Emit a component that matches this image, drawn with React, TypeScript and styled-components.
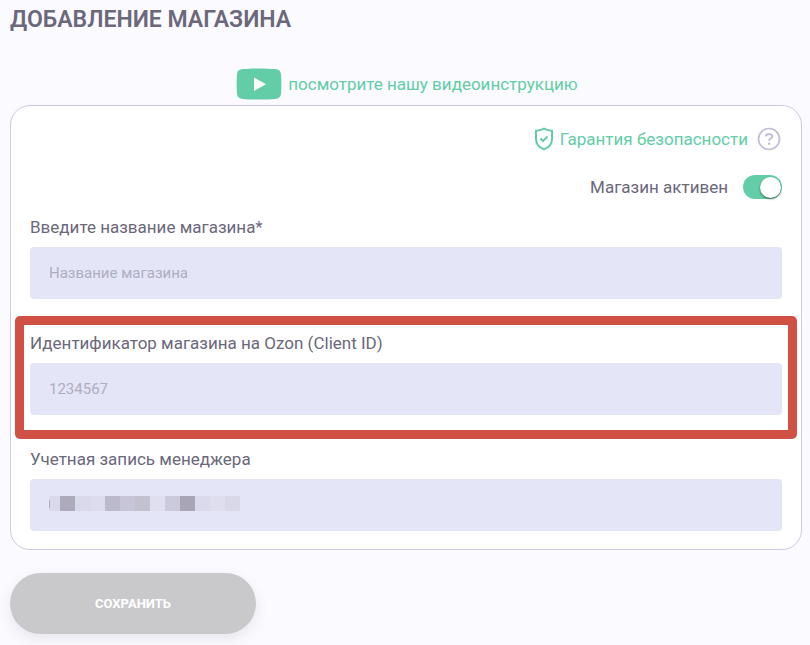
import React from "react";
import styled, { createGlobalStyle } from "styled-components";

const GlobalStyle = createGlobalStyle`
  *, *::before, *::after { box-sizing: border-box; }
  body {
    margin: 0;
    background: #fbfaff;
    color: #6b687b;
    font-family: Roboto, "Noto Sans", sans-serif;
    font-size: 17px;
    line-height: 24px;
  }
`;

const Page = styled.main`
  padding: 8px 8px 11px 10px;
`;

const Title = styled.h1`
  margin: 0 0 36px;
  font-size: 23px;
  line-height: 24px;
  font-weight: 600;
  text-transform: uppercase;
`;

const VideoLink = styled.a`
  display: flex;
  align-items: center;
  justify-content: center;
  gap: 6px;
  margin-bottom: 5px;
  padding-left: 2px;
  color: #62cda6;
  text-decoration: none;
`;

const Form = styled.form`
  margin: 0;
`;

const Card = styled.section`
  display: flex;
  flex-direction: column;
  padding: 21px 19px 18px;
  border: 1px solid #cdc9e2;
  border-radius: 20px;
  background: #fff;
`;

const SecurityRow = styled.div`
  display: flex;
  align-items: center;
  justify-content: flex-end;
  gap: 9px;
  padding-right: 1px;
`;

const SecurityLink = styled.a`
  display: flex;
  align-items: center;
  gap: 6px;
  color: #62cda6;
  text-decoration: none;
`;

const HelpButton = styled.button`
  display: flex;
  padding: 0;
  border: 0;
  background: none;
  color: #c2bedb;
  cursor: pointer;
`;

const SwitchLabel = styled.label`
  display: flex;
  align-items: center;
  align-self: flex-end;
  gap: 15px;
  margin: 24px 0 16px;
  cursor: pointer;
`;

const Switch = styled.input`
  appearance: none;
  display: flex;
  align-items: center;
  width: 39px;
  height: 24px;
  margin: 0;
  padding: 0 1px;
  border-radius: 12px;
  background: #c9c9cb;
  cursor: pointer;

  &::before {
    content: "";
    width: 21px;
    height: 21px;
    border-radius: 50%;
    background: #fff;
    box-shadow: 0 1px 2px rgba(0, 0, 0, 0.55);
  }

  &:checked {
    justify-content: flex-end;
    background: #62cda6;
  }
`;

const Fields = styled.div`
  display: flex;
  flex-direction: column;
  gap: 32px;
`;

const Field = styled.div<{ $highlighted?: boolean }>`
  position: relative;
  display: flex;
  flex-direction: column;
  gap: 8px;

  &::after {
    content: "";
    display: ${({ $highlighted }) => ($highlighted ? "block" : "none")};
    position: absolute;
    inset: -15px -15px -24px;
    border: 9px solid #d05144;
    border-radius: 5px;
    pointer-events: none;
  }
`;

const TextInput = styled.input`
  width: 100%;
  height: 52px;
  padding: 0 19px;
  border: 0;
  border-radius: 4px;
  background: #e4e5f7;
  color: #6b687b;
  font: 400 15px/20px Roboto, "Noto Sans", sans-serif;

  &::placeholder {
    color: #aeaec3;
    opacity: 1;
  }
`;

const InputWrap = styled.div`
  position: relative;
  display: flex;
`;

const Mosaic = styled.svg`
  position: absolute;
  left: 19px;
  top: 17px;
  pointer-events: none;
`;

const SaveButton = styled.button`
  min-width: 246px;
  height: 61px;
  margin-top: 23px;
  border: 0;
  border-radius: 31px;
  background: #c9c9cb;
  box-shadow: 0 5px 14px rgba(90, 90, 110, 0.12);
  color: #fff;
  font: 700 13px/20px Roboto, "Noto Sans", sans-serif;
  text-transform: uppercase;
`;

const mosaicCells = [
  "#d9d9eb", "#adabbb", "#d8d9eb", "#dddcee", "#bcbaca", "#c7c5d8", "#c3c1d0",
  "#e0dff0", "#cbcadc", "#a8a6b6", "#dbdaec", "#dedeef", "#d9d8e8",
];

function VideoIcon() {
  return (
    <svg width="46" height="32" viewBox="0 0 46 32" aria-hidden="true">
      <path
        d="M7 1.100C16 .2 30 .2 39 1.100c4 .4 5.600 2 6 5.400.5 6 .5 13 0 19-.4 3.500-2 5-6 5.400-9 .9-23 .9-32 0-4-.4-5.600-1.900-6-5.400-.5-6-.5-13 0-19 .4-3.400 2-5 6-5.400Z"
        fill="#62cda6"
      />
      <path d="M18 9.500v13.500l12-6.700Z" fill="#fff" />
    </svg>
  );
}

function ShieldIcon() {
  return (
    <svg width="20" height="24" viewBox="0 0 20 24" fill="none" stroke="#62cda6" strokeWidth="2" aria-hidden="true">
      <path d="M10 1.700C7.500 3.200 4.800 3.700 2 3.700V12c0 5 3 8.500 8 10.300 5-1.800 8-5.300 8-10.300V3.700c-2.800 0-5.500-.5-8-2Z" />
      <path d="m6.500 11.500 2.500 2.500 4.500-4.500" />
    </svg>
  );
}

function HelpIcon() {
  return (
    <svg width="24" height="24" viewBox="0 0 24 24" fill="none" stroke="currentColor" aria-hidden="true">
      <circle cx="12" cy="12" r="10.500" strokeWidth="1.700" />
      <path d="M8.900 9.500C8.900 7.700 10.200 6.900 12 6.900s3.200.9 3.200 2.500c0 2.100-3.100 2.200-3.100 4.700" strokeWidth="2" />
      <path d="M12.100 15.600v2.200" strokeWidth="2.200" />
    </svg>
  );
}

export default function App() {
  return (
    <>
      <GlobalStyle />
      <Page>
        <Title>Добавление магазина</Title>
        <VideoLink href="#video">
          <VideoIcon />
          посмотрите нашу видеоинструкцию
        </VideoLink>
        <Form onSubmit={(event) => event.preventDefault()}>
          <Card>
            <SecurityRow>
              <SecurityLink href="#security">
                <ShieldIcon />
                Гарантия безопасности
              </SecurityLink>
              <HelpButton type="button" aria-label="Справка">
                <HelpIcon />
              </HelpButton>
            </SecurityRow>
            <SwitchLabel>
              Магазин активен
              <Switch type="checkbox" role="switch" defaultChecked />
            </SwitchLabel>
            <Fields>
              <Field>
                <label htmlFor="shop-name">Введите название магазина*</label>
                <TextInput id="shop-name" placeholder="Название магазина" required />
              </Field>
              <Field $highlighted>
                <label htmlFor="client-id">Идентификатор магазина на Ozon (Client ID)</label>
                <TextInput id="client-id" placeholder="1234567" />
              </Field>
              <Field>
                <label htmlFor="manager">Учетная запись менеджера</label>
                <InputWrap>
                  <TextInput id="manager" />
                  <Mosaic width="192" height="15" viewBox="0 0 192 15" aria-hidden="true">
                    {mosaicCells.map((color, index) => (
                      <rect
                        key={index}
                        x={index === 0 ? 0 : index * 15 - 4}
                        width={index === 0 ? 11 : 15}
                        height="15"
                        fill={color}
                      />
                    ))}
                    <path d="M.5 4v8" stroke="#aeaec0" />
                  </Mosaic>
                </InputWrap>
              </Field>
            </Fields>
          </Card>
          <SaveButton type="submit">Сохранить</SaveButton>
        </Form>
      </Page>
    </>
  );
}
